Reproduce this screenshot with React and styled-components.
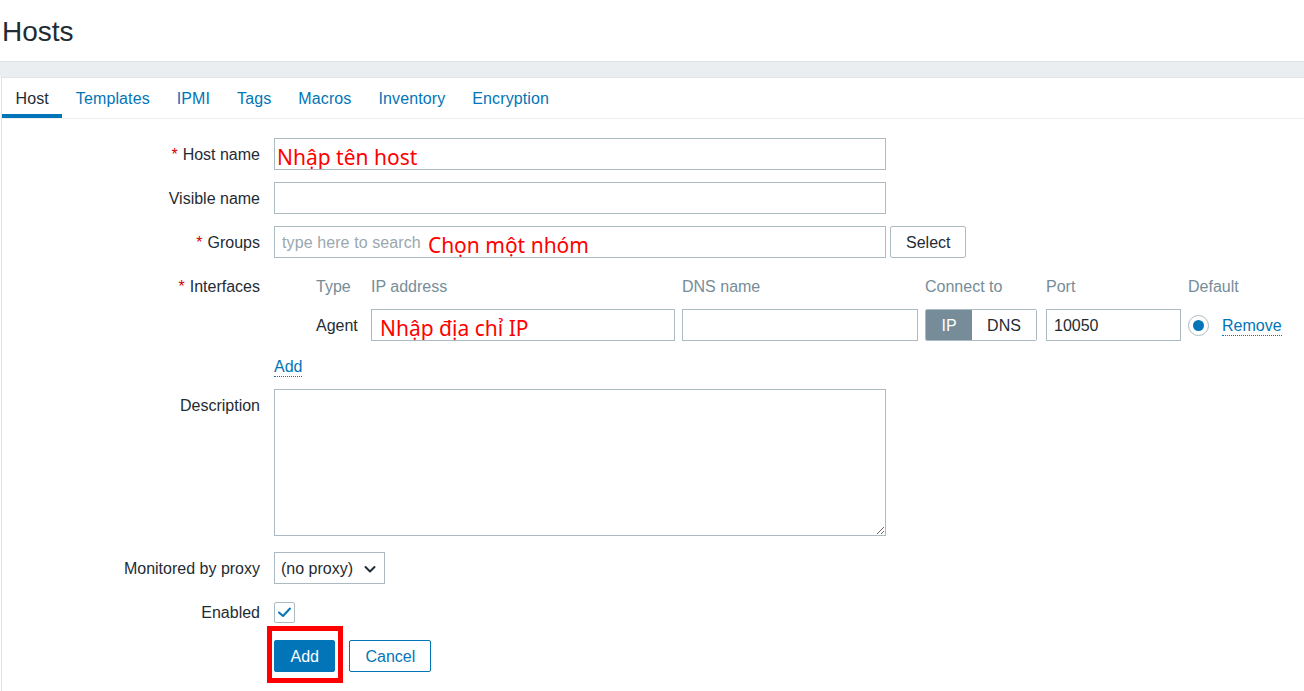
import React from 'react';
import styled, { createGlobalStyle } from 'styled-components';

const Global = createGlobalStyle`
  html, body { margin: 0; padding: 0; background: #fff; }
  body {
    font-family: "Liberation Sans", Arial, sans-serif;
    font-size: 16px;
    color: #1f2c33;
  }
  * { box-sizing: border-box; }
`;

const Page = styled.div`
  min-height: 691px;
  display: flex;
  flex-direction: column;
`;

const Header = styled.header`
  height: 61px;
  display: flex;
  align-items: center;
  padding: 2px 0 0 2px;
`;

const Title = styled.h1`
  margin: 0;
  font-size: 28px;
  font-weight: normal;
  color: #1f2c33;
`;

const Band = styled.div`
  height: 16px;
  background: #ebeef0;
  border-top: 1px solid #dfe4e7;
`;

const Panel = styled.main`
  flex: 1;
  margin-left: 1px;
  background: #fff;
  border-top: 1px solid #dfe4e7;
  border-left: 1px solid #dfe4e7;
`;

const TabBar = styled.nav`
  display: flex;
  height: 41px;
  border-bottom: 1px solid #ebeef0;
`;

const Tab = styled.a`
  display: flex;
  align-items: center;
  padding: 1px 13.5px 0;
  letter-spacing: 0.11px;
  color: ${p => (p.$active ? '#1f2c33' : '#0275b8')};
  box-shadow: ${p => (p.$active ? 'inset 0 -4px 0 #0275b8' : 'none')};
  text-decoration: none;
  cursor: pointer;
`;

const Form = styled.form`
  display: grid;
  grid-template-columns: 258px 1fr;
  column-gap: 14px;
  row-gap: 12px;
  padding-top: 19px;
`;

const Label = styled.label`
  text-align: right;
  height: 32px;
  padding-top: 1px;
  line-height: 32px;
  white-space: nowrap;
  color: #1f2c33;
`;

const Asterisk = styled.span`
  color: #d40000;
  margin-right: 5px;
`;

const Field = styled.div`
  display: flex;
  align-items: ${p => p.$align || 'flex-start'};
  flex-direction: ${p => p.$dir || 'row'};
  gap: ${p => p.$gap || 0}px;
  min-height: 32px;
`;

const TextBox = styled.div`
  width: ${p => p.$w || 612}px;
  height: 32px;
  border: 1px solid #acbbc2;
  background: #fff;
  display: flex;
  align-items: center;
  padding: 1px ${p => p.$pad ?? 7}px 0;
  gap: 7px;
  white-space: nowrap;
  overflow: hidden;
`;

const Placeholder = styled.span`
  color: #9aa7ae;
  letter-spacing: 0.1px;
`;

const Value = styled.span`
  color: #1f2c33;
`;

const Annotation = styled.span`
  font-family: "Noto Sans", "Open Sans", sans-serif;
  font-size: 21px;
  color: #ff0000;
  margin-top: 5px;
  line-height: 1;
`;

const PlainButton = styled.button`
  height: 32px;
  padding: 1px 15px 0;
  border: 1px solid #acbbc2;
  border-radius: 2px;
  background: #fff;
  color: #1f2c33;
  font: inherit;
  font-size: 16px;
`;

const IfaceGrid = styled.div`
  display: grid;
  grid-template-columns: 35px 48px 304px 236px 114px 135px auto;
  column-gap: 7px;
  row-gap: 7px;
  align-items: center;
`;

const ColHead = styled.div`
  height: 32px;
  padding-top: 1px;
  line-height: 32px;
  color: #768d99;
  white-space: nowrap;
`;

const Cell = styled.div`
  display: flex;
  align-items: center;
  gap: ${p => p.$gap || 0}px;
  padding-top: 1px;
  white-space: nowrap;
`;

const Segmented = styled.div`
  display: flex;
  width: 112px;
  height: 32px;
  border: 1px solid #acbbc2;
  border-radius: 2px;
  overflow: hidden;
`;

const Segment = styled.div`
  display: flex;
  align-items: center;
  justify-content: center;
  padding-top: 1px;
  width: ${p => (p.$w ? `${p.$w}px` : 'auto')};
  flex: ${p => (p.$w ? '0 0 auto' : 1)};
  background: ${p => (p.$on ? '#768d99' : '#fff')};
  color: ${p => (p.$on ? '#fff' : '#1f2c33')};
`;

const Radio = styled.span`
  width: 21px;
  height: 21px;
  border-radius: 50%;
  border: 1px solid #acbbc2;
  display: flex;
  align-items: center;
  justify-content: center;
  &::after {
    content: '';
    width: 11px;
    height: 11px;
    border-radius: 50%;
    background: #0275b8;
  }
`;

const Link = styled.a`
  color: #0275b8;
  text-decoration: none;
  border-bottom: 1px dotted #0275b8;
  padding-top: 1px;
  line-height: 19px;
  display: inline-block;
  cursor: pointer;
`;

const AddLink = styled(Link)`
  margin-top: 15px;
`;

const TextArea = styled.textarea`
  display: block;
  width: 612px;
  height: 147px;
  margin: 0 0 4px;
  border: 1px solid #acbbc2;
  border-radius: 0;
  resize: vertical;
  font: inherit;
  outline: none;
`;

const SelectBox = styled.div`
  width: 111px;
  height: 32px;
  border: 1px solid #acbbc2;
  display: flex;
  align-items: center;
  justify-content: space-between;
  padding: 1px 7px 0 6px;
  white-space: nowrap;
`;

const CheckBox = styled.span`
  width: 21px;
  height: 21px;
  border: 1px solid #acbbc2;
  border-radius: 2px;
  display: flex;
  align-items: center;
  justify-content: center;
`;

const Buttons = styled.div`
  grid-column: 2;
  display: flex;
  gap: 14px;
`;

const Highlight = styled.div`
  position: relative;
  &::after {
    content: '';
    position: absolute;
    top: -14px;
    left: -7px;
    right: -8px;
    bottom: -11px;
    border: 5px solid #ff0000;
    pointer-events: none;
  }
`;

const PrimaryButton = styled.button`
  height: 32px;
  padding: 1px ${p => p.$px || 15}px 0;
  border: 1px solid #0275b8;
  border-radius: 2px;
  background: #0275b8;
  color: #fff;
  font: inherit;
  font-size: 16px;
`;

const OutlineButton = styled(PrimaryButton)`
  background: #fff;
  color: #0275b8;
`;

const tabs = ['Host', 'Templates', 'IPMI', 'Tags', 'Macros', 'Inventory', 'Encryption'];

const Chevron = () => (
  <svg width="14" height="14" viewBox="0 0 14 14" fill="none">
    <path d="M2.5 5 L7 9.5 L11.5 5" stroke="#1f2c33" strokeWidth="2" strokeLinecap="round" strokeLinejoin="round" />
  </svg>
);

const Check = () => (
  <svg width="15" height="15" viewBox="0 0 15 15" fill="none">
    <path d="M2 7.5 L6 11 L13 3.5" stroke="#0275b8" strokeWidth="2" strokeLinecap="round" strokeLinejoin="round" />
  </svg>
);

export default function App() {
  return (
    <>
      <Global />
      <Page>
        <Header>
          <Title>Hosts</Title>
        </Header>
        <Band />
        <Panel>
          <TabBar>
            {tabs.map((t, i) => (
              <Tab key={t} $active={i === 0}>{t}</Tab>
            ))}
          </TabBar>
          <Form onSubmit={e => e.preventDefault()}>
            <Label><Asterisk>*</Asterisk>Host name</Label>
            <Field>
              <TextBox $pad={2}>
                <Annotation>Nhập tên host</Annotation>
              </TextBox>
            </Field>

            <Label>Visible name</Label>
            <Field>
              <TextBox />
            </Field>

            <Label><Asterisk>*</Asterisk>Groups</Label>
            <Field $gap={4}>
              <TextBox>
                <Placeholder>type here to search</Placeholder>
                <Annotation>Chọn một nhóm</Annotation>
              </TextBox>
              <PlainButton type="button">Select</PlainButton>
            </Field>

            <Label><Asterisk>*</Asterisk>Interfaces</Label>
            <Field $dir="column">
              <IfaceGrid>
                <span />
                <ColHead>Type</ColHead>
                <ColHead>IP address</ColHead>
                <ColHead>DNS name</ColHead>
                <ColHead>Connect to</ColHead>
                <ColHead>Port</ColHead>
                <ColHead>Default</ColHead>

                <span />
                <Cell>Agent</Cell>
                <TextBox $w={304} $pad={8}>
                  <Annotation>Nhập địa chỉ IP</Annotation>
                </TextBox>
                <TextBox $w={236} />
                <Segmented>
                  <Segment $on $w={46}>IP</Segment>
                  <Segment>DNS</Segment>
                </Segmented>
                <TextBox $w={135}>
                  <Value>10050</Value>
                </TextBox>
                <Cell $gap={13}>
                  <Radio />
                  <Link>Remove</Link>
                </Cell>
              </IfaceGrid>
              <AddLink>Add</AddLink>
            </Field>

            <Label>Description</Label>
            <Field>
              <TextArea />
            </Field>

            <Label>Monitored by proxy</Label>
            <Field>
              <SelectBox>
                <span>(no proxy)</span>
                <Chevron />
              </SelectBox>
            </Field>

            <Label>Enabled</Label>
            <Field $align="center">
              <CheckBox><Check /></CheckBox>
            </Field>

            <Buttons>
              <Highlight>
                <PrimaryButton type="submit" $px={15.5}>Add</PrimaryButton>
              </Highlight>
              <OutlineButton type="button">Cancel</OutlineButton>
            </Buttons>
          </Form>
        </Panel>
      </Page>
    </>
  );
}
